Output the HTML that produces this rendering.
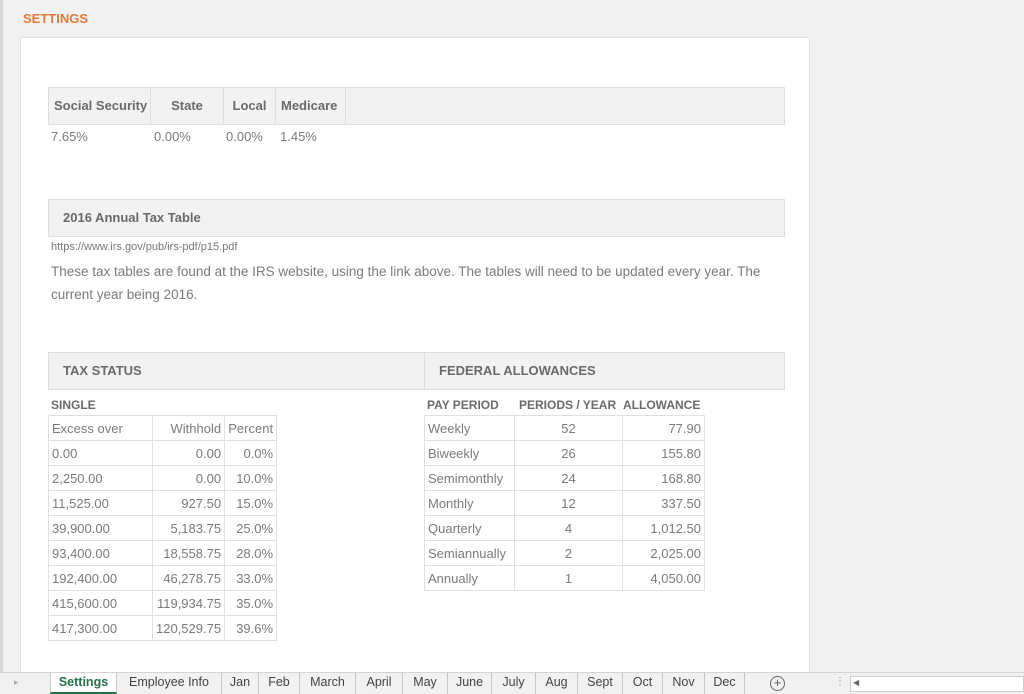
<!DOCTYPE html>
<html><head><style>
*{margin:0;padding:0;box-sizing:border-box}
body{width:1024px;height:694px;background:#f1f1f1;font-family:"Liberation Sans",sans-serif;color:#7a7a7a;position:relative;overflow:hidden;font-size:13px}
.a{position:absolute}
.panel{left:20px;top:37px;width:790px;height:636px;background:#fff;border:1px solid #e2e2e2}
.hdr{background:#f2f2f2;border:1px solid #dedede;font-weight:bold;color:#6a6a6a;font-size:13px}
.hdr div{position:absolute;top:0;height:36px;line-height:36px;border-right:1px solid #dedede}
table{border-collapse:collapse;position:absolute}
td{border:1px solid #e0e0e0;height:25px;padding:0 3px;font-size:13px;color:#7a7a7a;white-space:nowrap}
.r{text-align:right}.c{text-align:center}
.bl{font-weight:bold;color:#6a6a6a;font-size:12px}
.tabs{left:0;top:672px;width:1024px;height:22px;background:#f1f1f1;border-top:1px solid #d4d4d4}
.tab{position:absolute;top:0;height:21px;line-height:19px;font-size:12.5px;color:#444;text-align:center;border-right:1px solid #c8c8c8}
</style></head><body>
<div class="a" style="left:0;top:0;width:3px;height:672px;background:#d8d8d8"></div>
<div class="a" style="left:23px;top:11px;color:#e07b39;font-weight:bold;font-size:13px">SETTINGS</div>
<div class="a panel"></div>

<div class="a hdr" style="left:48px;top:87px;width:737px;height:38px">
<div style="left:0;width:102px;padding-left:5px">Social Security</div>
<div style="left:102px;width:73px;text-align:center">State</div>
<div style="left:175px;width:52px;text-align:center">Local</div>
<div style="left:227px;width:70px;padding-left:5px">Medicare</div>
</div>
<div class="a" style="left:51px;top:129px">7.65%</div>
<div class="a" style="left:154px;top:129px">0.00%</div>
<div class="a" style="left:226px;top:129px">0.00%</div>
<div class="a" style="left:280px;top:129px">1.45%</div>

<div class="a hdr" style="left:48px;top:199px;width:737px;height:38px"><div style="left:0;padding-left:14px;border:0">2016 Annual Tax Table</div></div>
<div class="a" style="left:51px;top:241px;font-size:11px;color:#777">https://www.irs.gov/pub/irs-pdf/p15.pdf</div>
<div class="a" style="left:51px;top:260px;width:730px;line-height:23px;font-size:13.5px">These tax tables are found at the IRS website, using the link above. The tables will need to be updated every year. The current year being 2016.</div>

<div class="a hdr" style="left:48px;top:352px;width:737px;height:38px">
<div style="left:0;width:376px;padding-left:14px">TAX STATUS</div>
<div style="left:376px;padding-left:14px;border:0">FEDERAL ALLOWANCES</div>
</div>
<div class="a bl" style="left:51px;top:398px">SINGLE</div>
<table style="left:48px;top:415px">
<colgroup><col style="width:104px"><col style="width:72px"><col style="width:52px"></colgroup>
<tr><td>Excess over</td><td class="r">Withhold</td><td class="r">Percent</td></tr>
<tr><td>0.00</td><td class="r">0.00</td><td class="r">0.0%</td></tr>
<tr><td>2,250.00</td><td class="r">0.00</td><td class="r">10.0%</td></tr>
<tr><td>11,525.00</td><td class="r">927.50</td><td class="r">15.0%</td></tr>
<tr><td>39,900.00</td><td class="r">5,183.75</td><td class="r">25.0%</td></tr>
<tr><td>93,400.00</td><td class="r">18,558.75</td><td class="r">28.0%</td></tr>
<tr><td>192,400.00</td><td class="r">46,278.75</td><td class="r">33.0%</td></tr>
<tr><td>415,600.00</td><td class="r">119,934.75</td><td class="r">35.0%</td></tr>
<tr><td>417,300.00</td><td class="r">120,529.75</td><td class="r">39.6%</td></tr>
</table>

<div class="a bl" style="left:427px;top:398px">PAY PERIOD</div>
<div class="a bl" style="left:519px;top:398px">PERIODS / YEAR</div>
<div class="a bl" style="left:623px;top:398px">ALLOWANCE</div>
<table style="left:424px;top:415px">
<colgroup><col style="width:90px"><col style="width:108px"><col style="width:82px"></colgroup>
<tr><td>Weekly</td><td class="c">52</td><td class="r">77.90</td></tr>
<tr><td>Biweekly</td><td class="c">26</td><td class="r">155.80</td></tr>
<tr><td>Semimonthly</td><td class="c">24</td><td class="r">168.80</td></tr>
<tr><td>Monthly</td><td class="c">12</td><td class="r">337.50</td></tr>
<tr><td>Quarterly</td><td class="c">4</td><td class="r">1,012.50</td></tr>
<tr><td>Semiannually</td><td class="c">2</td><td class="r">2,025.00</td></tr>
<tr><td>Annually</td><td class="c">1</td><td class="r">4,050.00</td></tr>
</table>

<div class="a tabs">
<div class="a" style="left:14px;top:4px;font-size:9px;color:#aaa">&#9656;</div>
<div class="tab" style="left:50px;width:67px;background:#fff;color:#217346;font-weight:bold;border-bottom:2px solid #217346;border-left:1px solid #c8c8c8">Settings</div>
<div class="tab" style="left:117px;width:105px">Employee Info</div>
<div class="tab" style="left:222px;width:37px">Jan</div>
<div class="tab" style="left:259px;width:41px">Feb</div>
<div class="tab" style="left:300px;width:56px">March</div>
<div class="tab" style="left:356px;width:47px">April</div>
<div class="tab" style="left:403px;width:45px">May</div>
<div class="tab" style="left:448px;width:44px">June</div>
<div class="tab" style="left:492px;width:44px">July</div>
<div class="tab" style="left:536px;width:42px">Aug</div>
<div class="tab" style="left:578px;width:45px">Sept</div>
<div class="tab" style="left:623px;width:40px">Oct</div>
<div class="tab" style="left:663px;width:42px">Nov</div>
<div class="tab" style="left:705px;width:40px">Dec</div>
<div class="a" style="left:770px;top:3px;width:15px;height:15px;border:1px solid #666;border-radius:50%;text-align:center;line-height:12px;font-size:13px;color:#555">+</div>
<div class="a" style="left:835px;top:3px;font-size:10px;color:#888">&#8942;</div>
<div class="a" style="left:850px;top:3px;width:174px;height:16px;background:#fff;border:1px solid #ccc"></div>
<div class="a" style="left:853px;top:5px;font-size:8px;color:#666">&#9664;</div>
</div>
</body></html>
